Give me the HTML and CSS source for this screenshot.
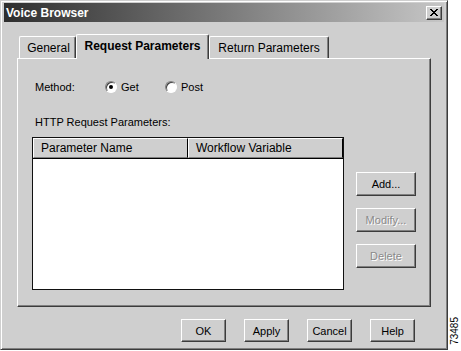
FILE: index.html
```html
<!DOCTYPE html>
<html lang="en">
<head>
    <meta charset="UTF-8">
    <meta name="viewport" content="width=device-width, initial-scale=1.0">
    <title>Voice Browser</title>
    <link rel="stylesheet" href="styles.css">
</head>
<body>
    <div class="page">
        <div class="window">
            <div class="titlebar">
                <span class="title">Voice Browser</span>
                <span class="close-btn">
                    <svg width="8" height="7" viewBox="0 0 8 7">
                        <path d="M0 0 L7 7 M1 0 L8 7 M7 0 L0 7 M8 0 L1 7" stroke="#000" stroke-width="1" fill="none"/>
                    </svg>
                </span>
            </div>

            <div class="tabs">
                <div class="tab tab-general">General</div>
                <div class="tab tab-active">Request Parameters</div>
                <div class="tab tab-return">Return Parameters</div>
            </div>

            <div class="panel">
                <div class="method-row">
                    <span class="method-label">Method:</span>
                    <label class="radio radio-get"><span class="radio-dot checked"></span>Get</label>
                    <label class="radio"><span class="radio-dot"></span>Post</label>
                </div>

                <div class="section-label">HTTP Request Parameters:</div>

                <div class="list-row">
                    <div class="list">
                        <div class="list-header">
                            <div class="col col-name">Parameter Name</div>
                            <div class="col col-var">Workflow Variable</div>
                        </div>
                        <div class="list-body"></div>
                    </div>
                    <div class="side-buttons">
                        <button class="btn side-btn">Add...</button>
                        <button class="btn side-btn" disabled>Modify...</button>
                        <button class="btn side-btn" disabled>Delete</button>
                    </div>
                </div>
            </div>

            <div class="footer">
                <button class="btn foot-btn">OK</button>
                <button class="btn foot-btn">Apply</button>
                <button class="btn foot-btn">Cancel</button>
                <button class="btn foot-btn">Help</button>
            </div>
        </div>
        <div class="fig-number">73485</div>
    </div>
</body>
</html>
```

FILE: styles.css
```css
body {
    margin: 0;
    background-color: #fff;
    font-family: "Liberation Sans", Arial, sans-serif;
    font-size: 12px;
    color: #000;
}
.page {
    display: flex;
    align-items: flex-end;
}
.window {
    box-sizing: border-box;
    width: 448px;
    height: 350px;
    padding: 2px 3px;
    background-color: #cfcfcf;
    border: 1px solid;
    border-color: #cfcfcf #3c3c3c #3c3c3c #cfcfcf;
    box-shadow: inset 1px 1px #fff, inset -1px -1px #808080;
}
.titlebar {
    height: 19px;
    display: flex;
    align-items: center;
    justify-content: space-between;
    padding: 0 2px;
    background: linear-gradient(to right, #2e2e2e, #c6c6c6);
}
.title {
    color: #fff;
    font-weight: bold;
    font-size: 12px;
}
.close-btn {
    box-sizing: border-box;
    width: 16px;
    height: 14px;
    display: flex;
    align-items: center;
    justify-content: center;
    background-color: #cfcfcf;
    border: 1px solid;
    border-color: #fff #3c3c3c #3c3c3c #fff;
    box-shadow: inset -1px -1px #808080;
}

/* tabs */
.tabs {
    display: flex;
    align-items: flex-end;
    margin: 12px 0 0 15px;
    position: relative;
    z-index: 1;
}
.tab {
    box-sizing: border-box;
    height: 22px;
    display: flex;
    align-items: center;
    justify-content: center;
    border: 1px solid;
    border-bottom: none;
    border-color: #fff #3c3c3c #fff #fff;
    border-radius: 2px 2px 0 0;
    box-shadow: inset -1px 0 #808080;
    background-color: #cfcfcf;
}
.tab-general {
    width: 57px;
    padding-left: 2px;
}
.tab-active {
    width: 133px;
    height: 25px;
    margin-bottom: -1px;
    font-weight: bold;
    padding-bottom: 3px;
}
.tab-return {
    width: 120px;
}

.panel {
    box-sizing: border-box;
    width: 414px;
    height: 249px;
    margin-left: 13px;
    padding: 20px 0 0 14px;
    border: 1px solid;
    border-color: #fff #3c3c3c #3c3c3c #fff;
    box-shadow: inset -1px -1px #808080;
}
.method-row {
    display: flex;
    align-items: center;
    height: 16px;
    font-size: 11px;
    padding-left: 3px;
}
.method-label {
    width: 70px;
}
.radio {
    display: flex;
    align-items: center;
    gap: 4px;
}
.radio-get {
    width: 60px;
}
.radio-dot {
    box-sizing: border-box;
    width: 12px;
    height: 12px;
    border-radius: 50%;
    border: 1px solid;
    border-color: #808080 #fff #fff #808080;
    background-color: #fff;
    box-shadow: inset 1px 1px #404040;
    display: flex;
    align-items: center;
    justify-content: center;
}
.radio-dot.checked::after {
    content: "";
    width: 4px;
    height: 4px;
    border-radius: 50%;
    background-color: #000;
}
.section-label {
    font-size: 11px;
    padding-left: 3px;
    margin-top: 20px;
    line-height: 14px;
}

/* list view */
.list-row {
    display: flex;
    gap: 12px;
    margin-top: 8px;
}
.list {
    box-sizing: border-box;
    width: 312px;
    height: 153px;
    border: 1px solid #111;
    background-color: #fff;
    display: flex;
    flex-direction: column;
}
.list-header {
    display: flex;
    height: 20px;
    background-color: #cfcfcf;
    border-bottom: 1px solid #000;
}
.col {
    box-sizing: border-box;
    display: flex;
    align-items: center;
    padding-left: 7px;
    border-left: 1px solid #fff;
    border-top: 1px solid #fff;
    border-right: 1px solid #000;
    border-bottom: 1px solid #808080;
}
.col-name {
    width: 155px;
}
.col-var {
    flex: 1;
}
.list-body {
    flex: 1;
}

/* buttons */
.btn {
    box-sizing: border-box;
    font-family: "Liberation Sans", Arial, sans-serif;
    font-size: 11px;
    color: #000;
    background-color: #cfcfcf;
    border: 1px solid;
    border-color: #fff #3c3c3c #3c3c3c #fff;
    box-shadow: inset -1px -1px #808080;
    padding: 0;
}
.btn:disabled {
    color: #8a8a8a;
    text-shadow: 1px 1px #fff;
}
.side-buttons {
    display: flex;
    flex-direction: column;
    gap: 12px;
    padding-top: 35px;
}
.side-btn {
    width: 60px;
    height: 24px;
}
.footer {
    display: flex;
    justify-content: flex-end;
    gap: 18px;
    margin-top: 12px;
    padding-right: 29px;
}
.foot-btn {
    width: 45px;
    height: 23px;
}

.fig-number {
    writing-mode: vertical-rl;
    transform: rotate(180deg);
    font-size: 10px;
    margin: 0 0 5px 1px;
    line-height: 11px;
}
```
